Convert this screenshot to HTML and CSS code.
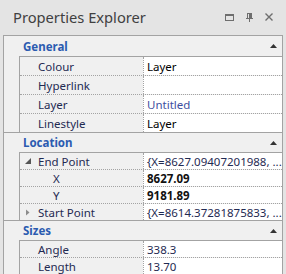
FILE: index.html
```html
<!DOCTYPE html>
<html lang="en">
<head>
  <meta charset="UTF-8" />
  <title>Properties Explorer</title>
  <link rel="stylesheet" href="styles.css">
</head>
<body>

  <!-- Title bar -->
  <div class="titlebar">
    <span class="title">Properties Explorer</span>
    <div class="tools">
      <svg width="9" height="7" viewBox="0 0 9 7"><rect x="0.5" y="0.5" width="8" height="6" fill="none" stroke="#6e6e6e"/><rect x="0" y="0" width="9" height="2" fill="#6e6e6e"/></svg>
      <svg width="7" height="9" viewBox="0 0 7 9"><rect x="1.5" y="0.5" width="4" height="5" fill="none" stroke="#6e6e6e"/><rect x="3" y="1" width="2" height="4" fill="#6e6e6e"/><rect x="0" y="5" width="7" height="1" fill="#6e6e6e"/><rect x="3" y="6" width="1" height="3" fill="#6e6e6e"/></svg>
      <svg width="8" height="8" viewBox="0 0 8 8"><path d="M0.5 0.5L7.5 7.5M7.5 0.5L0.5 7.5" stroke="#6e6e6e" stroke-width="1.4"/></svg>
    </div>
  </div>

  <!-- Property grid -->
  <div class="panel">

    <div class="section big">
      <div class="section-head">
        <span>General</span>
        <svg width="7" height="4" viewBox="0 0 7 4"><path d="M0 4L3.5 0L7 4Z" fill="#333"/></svg>
      </div>
      <div class="grid">
        <div class="row"><div class="name">Colour</div><div class="value plain">Layer</div></div>
        <div class="row"><div class="name">Hyperlink</div><div class="value"></div></div>
        <div class="row"><div class="name">Layer</div><div class="value blue">Untitled</div></div>
        <div class="row"><div class="name">Linestyle</div><div class="value plain">Layer</div></div>
      </div>
    </div>

    <div class="section">
      <div class="section-head">
        <span>Location</span>
        <svg width="7" height="4" viewBox="0 0 7 4"><path d="M0 4L3.5 0L7 4Z" fill="#333"/></svg>
      </div>
      <div class="grid">
        <div class="row">
          <div class="name toggle"><svg width="13" height="6" viewBox="0 0 13 6"><path d="M6 0L6 6L0 6Z" fill="#555"/></svg>End Point</div>
          <div class="value">{X=8627.09407201988, ...</div>
        </div>
        <div class="row"><div class="name sub">X</div><div class="value bold">8627.09</div></div>
        <div class="row"><div class="name sub">Y</div><div class="value bold">9181.89</div></div>
        <div class="row">
          <div class="name toggle"><svg width="13" height="7" viewBox="0 0 13 7"><path d="M1 0.5L4.5 3.5L1 6.5Z" fill="#8c8c8c"/></svg>Start Point</div>
          <div class="value">{X=8614.37281875833, ...</div>
        </div>
      </div>
    </div>

    <div class="section">
      <div class="section-head">
        <span>Sizes</span>
        <svg width="7" height="4" viewBox="0 0 7 4"><path d="M0 4L3.5 0L7 4Z" fill="#333"/></svg>
      </div>
      <div class="grid">
        <div class="row"><div class="name">Angle</div><div class="value">338.3</div></div>
        <div class="row"><div class="name">Length</div><div class="value">13.70</div></div>
      </div>
    </div>

  </div>

</body>
</html>
```

FILE: styles.css
```css
* {
  box-sizing: border-box;
  margin: 0;
  padding: 0;
}

body {
  background: #e4e4e4;
  font-family: 'Noto Sans', sans-serif;
  font-size: 11.5px;
  color: #1f2a52;
  overflow: hidden;
}

.titlebar {
  height: 35px;
  display: flex;
  align-items: center;
  padding: 0 13px;
}

.title {
  font-size: 14.7px;
  color: #404040;
  margin-top: -2px;
}

.tools {
  margin-left: auto;
  display: flex;
  align-items: center;
  gap: 12px;
  margin-top: -1px;
}

.tools svg {
  display: block;
}

.panel {
  margin-left: 3px;
  width: 280px;
  border: 1px solid #a3a3a3;
  border-bottom: none;
  background: #f0f0f0;
}

.section {
  border-bottom: 1px solid #a3a3a3;
}

.section-head {
  height: 19px;
  display: flex;
  align-items: center;
  justify-content: space-between;
  padding: 0 5px 0 19px;
  font-weight: bold;
  color: #2b5bb0;
}

.big .section-head {
  height: 20px;
}

.grid {
  margin-left: 15px;
  border-left: 1px solid #a3a3a3;
  border-top: 1px solid #a3a3a3;
}

.row {
  display: grid;
  grid-template-columns: 123px 1fr;
  height: 17px;
  border-bottom: 1px dotted #a3a3a3;
}

.big .row {
  height: 19px;
}

.row:last-child {
  border-bottom: none;
  height: 16px;
}

.big .row:last-child {
  height: 18px;
}

.name {
  display: flex;
  align-items: center;
  padding-left: 18px;
  white-space: nowrap;
}

.name.toggle {
  padding-left: 5px;
}

.name.sub {
  padding-left: 33px;
}

.value {
  display: flex;
  align-items: center;
  background: #fff;
  border-left: 1px dotted #a3a3a3;
  padding-left: 3px;
  white-space: nowrap;
  overflow: hidden;
}

.value.plain {
  color: #000;
}

.value.blue {
  color: #3d4f9f;
}

.value.bold {
  font-weight: bold;
  color: #111;
}
```
